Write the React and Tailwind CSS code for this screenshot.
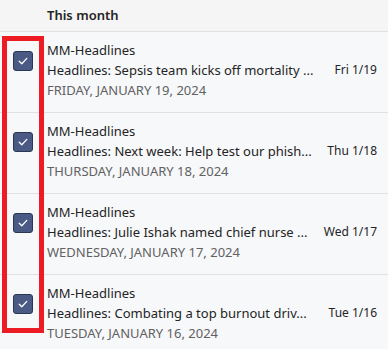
const items = [
  { subject: 'Headlines: Sepsis team kicks off mortality ...', short: 'Fri 1/19', full: 'FRIDAY, JANUARY 19, 2024' },
  { subject: 'Headlines: Next week: Help test our phish...', short: 'Thu 1/18', full: 'THURSDAY, JANUARY 18, 2024' },
  { subject: 'Headlines: Julie Ishak named chief nurse ...', short: 'Wed 1/17', full: 'WEDNESDAY, JANUARY 17, 2024' },
  { subject: 'Headlines: Combating a top burnout driv...', short: 'Tue 1/16', full: 'TUESDAY, JANUARY 16, 2024' },
]

function CheckBox() {
  return (
    <div className="flex h-5 w-5 items-center justify-center rounded-[3px] border border-[#2c3752] bg-[#4a5a84]">
      <svg width="12" height="12" viewBox="0 0 12 12" fill="none">
        <path d="M2.2 6.3 L4.8 8.8 L9.8 3.4" stroke="white" strokeWidth="1.3" strokeLinecap="round" strokeLinejoin="round" />
      </svg>
    </div>
  )
}

export default function App() {
  return (
    <div className="relative h-[349px] w-[388px] overflow-hidden bg-[#f7f8fa] text-[#242424]" style={{ fontFamily: '"Noto Sans", sans-serif' }}>
      {/* Header */}
      <div className="flex h-[32px] items-center border-b border-[#e1e1e1] bg-[#f5f5f5] pl-[47px] text-[13px] font-semibold">
        This month
      </div>

      {/* Rows */}
      {items.map((it) => (
        <div key={it.full} className="flex h-[81px] border-b border-[#e1e1e1]">
          <div className="w-[47px] shrink-0 pl-[13px] pt-[19px]">
            <CheckBox />
          </div>
          <div className="flex min-w-0 flex-1 flex-col pt-[8px] pr-[11px] text-[13px] leading-[20px]">
            <span>MM-Headlines</span>
            <div className="flex items-center justify-between">
              <span className="truncate whitespace-nowrap">{it.subject}</span>
              <span className="ml-3 shrink-0 text-[12px]">{it.short}</span>
            </div>
            <span className="text-[#616161]">{it.full}</span>
          </div>
        </div>
      ))}

      {/* Red highlight annotation */}
      <div className="pointer-events-none absolute left-[2px] top-[36px] h-[297px] w-[42px] border-[5px] border-[#ed1c24]" />
    </div>
  )
}
